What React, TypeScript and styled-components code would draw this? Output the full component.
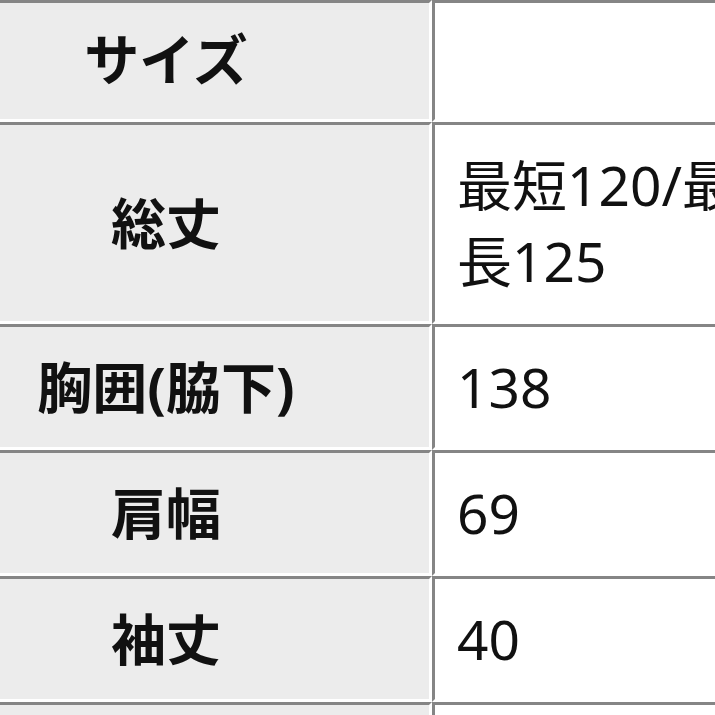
import React from "react";
import styled, { createGlobalStyle } from "styled-components";

const GlobalStyle = createGlobalStyle`
    html, body {
        margin: 0;
        padding: 0;
        background: #ffffff;
        overflow: hidden;
    }
    body {
        font-family: "Noto Sans", "Noto Sans CJK JP", sans-serif;
        color: #111111;
    }
`;

const Frame = styled.div`
    width: 715px;
    height: 715px;
    overflow: hidden;
`;

const SizeTable = styled.table`
    border-collapse: separate;
    border-spacing: 0;
    table-layout: fixed;
    width: 892px;
    margin-left: -100px;
    font-size: 55px;
    line-height: 76px;

    tr:first-child td {
        padding-top: 18px;
    }
`;

const Cell = styled.td`
    box-sizing: border-box;
    border-top: 3px solid #858585;
    border-left: 3px solid #858585;
    border-bottom: 3px solid #ffffff;
    border-right: 3px solid #ffffff;
    padding: 22px;
    vertical-align: middle;
`;

const LabelCell = styled(Cell)`
    width: 532px;
    background: #ececec;
    text-align: center;
    font-weight: 700;
    white-space: nowrap;
`;

const ValueCell = styled(Cell)`
    width: 360px;
    background: #ffffff;
    text-align: left;
    font-weight: 400;
    word-break: break-all;
`;

type Row = {
    label: string;
    value: string;
};

const rows: Row[] = [
    { label: "サイズ", value: "" },
    { label: "総丈", value: "最短120/最長125" },
    { label: "胸囲(脇下)", value: "138" },
    { label: "肩幅", value: "69" },
    { label: "袖丈", value: "40" },
    { label: "\u00a0", value: "" },
];

const App = () => {
    return (
        <Frame>
            <GlobalStyle />
            <SizeTable>
                <tbody>
                    {rows.map((row, i) => (
                        <tr key={i}>
                            <LabelCell>{row.label}</LabelCell>
                            <ValueCell>{row.value || "\u00a0"}</ValueCell>
                        </tr>
                    ))}
                </tbody>
            </SizeTable>
        </Frame>
    );
};

export default App;
